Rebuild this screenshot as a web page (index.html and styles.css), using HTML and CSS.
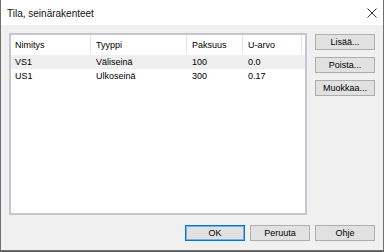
FILE: index.html
```html
<!DOCTYPE html>
<html lang="fi">
<head>
    <meta charset="UTF-8">
    <meta name="viewport" content="width=device-width, initial-scale=1.0">
    <title>Tila, seinärakenteet</title>
    <link rel="stylesheet" href="styles.css">
</head>
<body>

<div class="window">
    <div class="titlebar">
        <span class="title">Tila, seinärakenteet</span>
        <svg class="close" width="10" height="10" viewBox="0 0 10 10">
            <path d="M0.5 0.5 L9.5 9.5 M9.5 0.5 L0.5 9.5" stroke="#333" stroke-width="1" fill="none"/>
        </svg>
    </div>

    <div class="content">
        <div class="main">
            <div class="list">
                <div class="row header">
                    <div class="cell">Nimitys</div>
                    <div class="cell">Tyyppi</div>
                    <div class="cell">Paksuus</div>
                    <div class="cell">U-arvo</div>
                </div>
                <div class="row hot">
                    <div class="cell">VS1</div>
                    <div class="cell">Väliseinä</div>
                    <div class="cell">100</div>
                    <div class="cell">0.0</div>
                </div>
                <div class="row">
                    <div class="cell">US1</div>
                    <div class="cell">Ulkoseinä</div>
                    <div class="cell">300</div>
                    <div class="cell">0.17</div>
                </div>
            </div>

            <div class="side">
                <button class="btn">Lisää...</button>
                <button class="btn">Poista...</button>
                <button class="btn">Muokkaa...</button>
            </div>
        </div>

        <div class="footer">
            <button class="btn default">OK</button>
            <button class="btn">Peruuta</button>
            <button class="btn">Ohje</button>
        </div>
    </div>
</div>

</body>
</html>
```

FILE: styles.css
```css
body {
    margin: 0;
    background-color: #5a5a5a;
    font-family: "Liberation Sans", Arial, sans-serif;
    font-size: 9px;
    color: #000;
}
.window {
    width: 384px;
    height: 251px;
    box-sizing: border-box;
    border: 1px solid #6f6f6f;
    border-top: none;
    background-color: #f0f0f0;
    display: flex;
    flex-direction: column;
}
.titlebar {
    height: 25px;
    flex: none;
    background-color: #fff;
    display: flex;
    align-items: center;
    justify-content: space-between;
    padding: 0 6px 0 6px;
}
.title {
    font-size: 10px;
    color: #111;
    margin-top: 1px;
}
.close {
    margin-top: 1px;
}
.content {
    flex: 1;
    display: flex;
    flex-direction: column;
    padding: 8px 8px 9px 8px;
}
.main {
    display: flex;
    gap: 8px;
    height: 182px;
}
.list {
    width: 298px;
    box-sizing: border-box;
    border: 2px solid #c6c6ce;
    background-color: #fff;
}
.row {
    display: grid;
    grid-template-columns: 80px 96px 56px 59px;
    height: 14px;
    align-items: center;
}
.row.header {
    height: 19px;
    margin-bottom: 1px;
    align-items: stretch;
}
.header .cell {
    display: flex;
    align-items: center;
    border-right: 1px solid #e5e5e5;
}
.cell {
    padding-left: 4px;
    white-space: nowrap;
    box-sizing: border-box;
}
.cell + .cell {
    padding-left: 5px;
}
.row.hot {
    background-color: #efefef;
}
.side {
    display: flex;
    flex-direction: column;
    gap: 7px;
    padding-top: 1px;
}
.btn {
    width: 60px;
    height: 16px;
    padding: 0;
    box-sizing: border-box;
    border: 1px solid #adadad;
    background-color: #e1e1e1;
    font-family: "Liberation Sans", Arial, sans-serif;
    font-size: 9px;
    color: #000;
}
.btn.default {
    border-color: #0078d7;
    box-shadow: inset 0 0 0 1px rgba(0, 120, 215, 0.45);
}
.footer {
    display: flex;
    justify-content: flex-end;
    gap: 5px;
    margin-top: auto;
}
```
